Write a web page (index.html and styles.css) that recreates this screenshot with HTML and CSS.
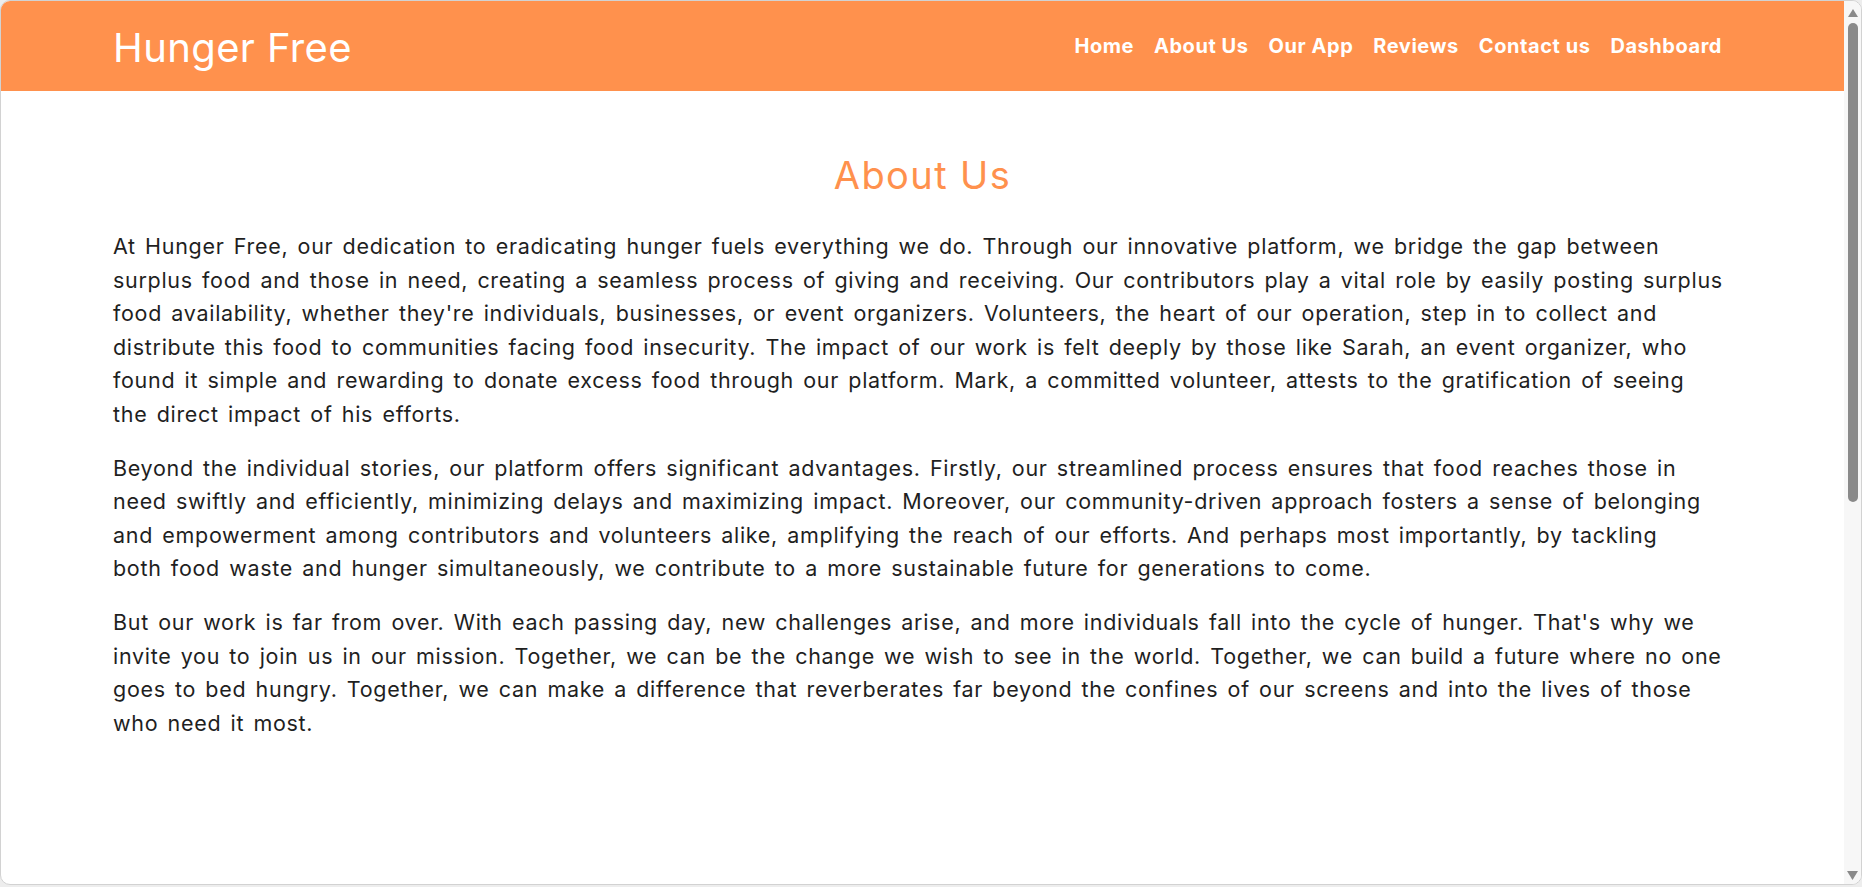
FILE: index.html
```html
<!DOCTYPE html>
<html lang="en">
<head>
<meta charset="utf-8">
<title>Hunger Free - About Us</title>
<link rel="stylesheet" href="styles.css">
</head>
<body>
<div class="window">
  <div class="page">
    <header class="topbar">
      <div class="logo">Hunger Free</div>
      <nav class="nav">
        <a href="#">Home</a>
        <a href="#">About Us</a>
        <a href="#">Our App</a>
        <a href="#">Reviews</a>
        <a href="#">Contact us</a>
        <a href="#">Dashboard</a>
      </nav>
    </header>
    <main class="about">
      <h1 class="title">About Us</h1>
      <p>At Hunger Free, our dedication to eradicating hunger fuels everything we do. Through our innovative platform, we bridge the gap between<br>surplus food and those in need, creating a seamless process of giving and receiving. Our contributors play a vital role by easily posting surplus<br>food availability, whether they're individuals, businesses, or event organizers. Volunteers, the heart of our operation, step in to collect and<br>distribute this food to communities facing food insecurity. The impact of our work is felt deeply by those like Sarah, an event organizer, who<br>found it simple and rewarding to donate excess food through our platform. Mark, a committed volunteer, attests to the gratification of seeing<br>the direct impact of his efforts.</p>
      <p>Beyond the individual stories, our platform offers significant advantages. Firstly, our streamlined process ensures that food reaches those in<br>need swiftly and efficiently, minimizing delays and maximizing impact. Moreover, our community-driven approach fosters a sense of belonging<br>and empowerment among contributors and volunteers alike, amplifying the reach of our efforts. And perhaps most importantly, by tackling<br>both food waste and hunger simultaneously, we contribute to a more sustainable future for generations to come.</p>
      <p>But our work is far from over. With each passing day, new challenges arise, and more individuals fall into the cycle of hunger. That's why we<br>invite you to join us in our mission. Together, we can be the change we wish to see in the world. Together, we can build a future where no one<br>goes to bed hungry. Together, we can make a difference that reverberates far beyond the confines of our screens and into the lives of those<br>who need it most.</p>
    </main>
  </div>
  <div class="scrollbar" aria-hidden="true">
    <svg class="arrow up" width="10" height="8" viewBox="0 0 10 8"><path d="M5 0 L10 8 L0 8 Z" fill="#8a8a8a"/></svg>
    <div class="thumb"></div>
    <div class="track-rest"></div>
    <svg class="arrow down" width="11" height="9" viewBox="0 0 11 9"><path d="M0 0 L11 0 L5.5 9 Z" fill="#8a8a8a"/></svg>
  </div>
</div>
</body>
</html>
```

FILE: styles.css
```css
html, body {
  margin: 0;
  padding: 0;
}

body {
  background: #ededed;
  font-family: "Inter", "Noto Sans", "DejaVu Sans", sans-serif;
  height: 887px;
  overflow: hidden;
}

.window {
  box-sizing: border-box;
  height: 885px;
  border: 1px solid #d2d2d2;
  border-radius: 10px;
  background: #ffffff;
  overflow: hidden;
  display: flex;
}

.page {
  flex: 1;
  display: flex;
  flex-direction: column;
  min-width: 0;
}

.topbar {
  height: 90px;
  flex: none;
  background: #ff914d;
  display: flex;
  align-items: center;
  justify-content: space-between;
  padding: 0 112px;
}

.logo {
  color: #ffffff;
  font-size: 40px;
  font-weight: 400;
  letter-spacing: 0.4px;
  margin-top: 2px;
}

.nav {
  display: flex;
  align-items: center;
}

.nav a {
  color: #ffffff;
  text-decoration: none;
  font-size: 20px;
  font-weight: 700;
  letter-spacing: 0.55px;
  padding: 0 10px;
}

.about {
  padding: 0 112px;
  color: #1f1f1f;
}

.title {
  margin: 61px 0 32px;
  text-align: center;
  color: #ff914d;
  font-size: 38px;
  font-weight: 400;
  letter-spacing: 1.4px;
  line-height: 46px;
}

.about p {
  margin: 0 0 20px;
  font-size: 21.5px;
  line-height: 33.6px;
  letter-spacing: 0.7px;
  word-spacing: 2.5px;
  white-space: nowrap;
}

.scrollbar {
  width: 17px;
  flex: none;
  background: #f7f7f7;
  display: flex;
  flex-direction: column;
  align-items: center;
  padding: 8px 0 4px;
  box-sizing: border-box;
}

.arrow {
  display: block;
  flex: none;
}

.thumb {
  width: 10px;
  height: 479px;
  margin-top: 6px;
  background: #8a8a8a;
  border-radius: 5px;
  flex: none;
}

.track-rest {
  flex: 1;
}
```
